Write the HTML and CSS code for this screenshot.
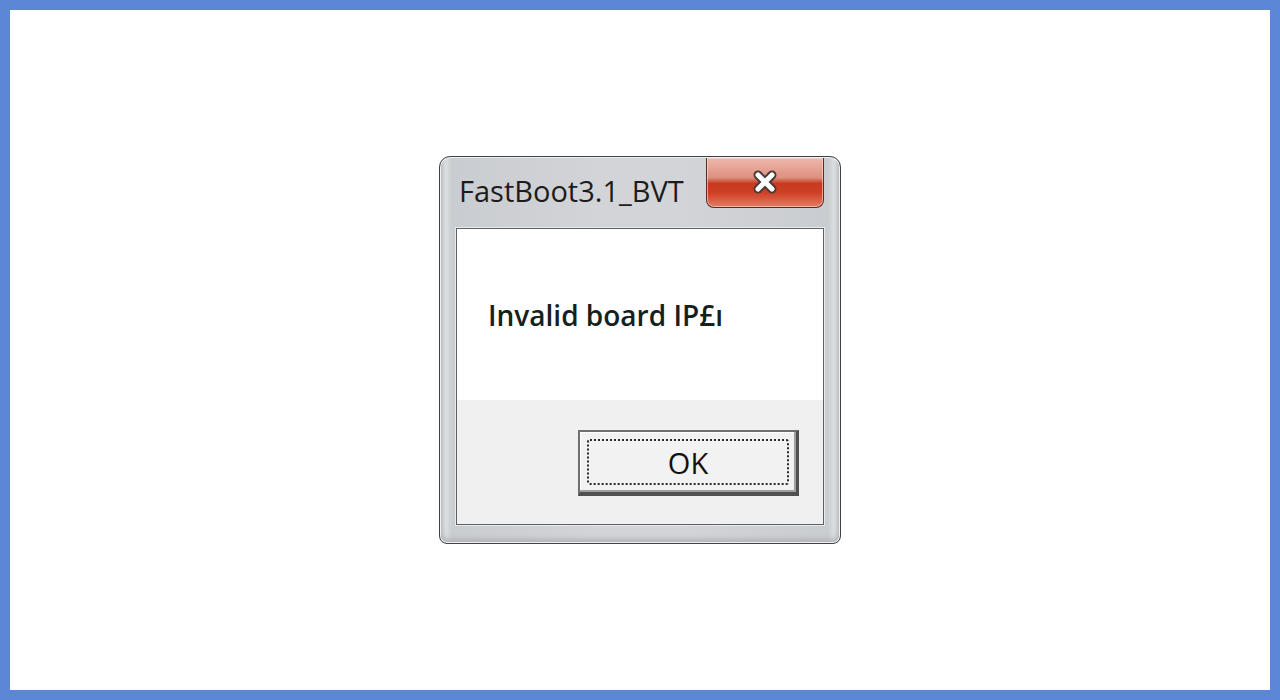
FILE: index.html
```html
<!DOCTYPE html>
<html lang="en">
<head>
    <meta charset="UTF-8">
    <meta name="viewport" content="width=device-width, initial-scale=1.0">
    <title>FastBoot3.1_BVT</title>
    <link rel="stylesheet" href="styles.css">
</head>
<body>
    <div class="page">
        <div class="dialog">
            <div class="titlebar">
                <span class="title">FastBoot3.1_BVT</span>
                <div class="close">
                    <svg width="30" height="26" viewBox="0 0 30 26">
                        <path d="M8 5 L22 19 M22 5 L8 19" stroke="#4a3a38" stroke-width="9" stroke-linecap="round"/>
                        <path d="M8 5 L22 19 M22 5 L8 19" stroke="#ffffff" stroke-width="5" stroke-linecap="round"/>
                    </svg>
                </div>
            </div>
            <div class="client">
                <div class="message">Invalid board IP£ı</div>
                <div class="footer">
                    <button type="button" class="ok"><span class="focus">OK</span></button>
                </div>
            </div>
        </div>
    </div>
</body>
</html>
```

FILE: styles.css
```css
body {
    margin: 0;
    background: #5b87d6;
    padding: 10px;
    height: 680px;
}
.page {
    background: #ffffff;
    height: 680px;
    display: flex;
    align-items: center;
    justify-content: center;
}
.dialog {
    width: 402px;
    height: 388px;
    box-sizing: border-box;
    border: 1px solid #3f4246;
    border-radius: 11px 11px 8px 8px;
    background: linear-gradient(to right, #b9bcc1 0, #dcdee1 6px, #c9ccd0 12px, #d2d4d8 40%, #d2d4d8 60%, #c9ccd0 calc(100% - 12px), #dcdee1 calc(100% - 6px), #b9bcc1 100%);
    box-shadow: inset 0 0 0 1px #eef0f2, inset 0 -6px 6px -3px #a9acb1;
    display: flex;
    flex-direction: column;
    padding: 0 16px 18px 16px;
}
.titlebar {
    height: 71px;
    display: flex;
    justify-content: space-between;
    align-items: flex-start;
}
.title {
    font-family: "Open Sans", sans-serif;
    font-size: 29px;
    color: #1c1c1c;
    margin-top: 14px;
    margin-left: 3px;
}
.close {
    width: 116px;
    height: 49px;
    margin-top: 1px;
    border: 1px solid #5b2b24;
    border-top: none;
    border-radius: 0 0 8px 8px;
    background: linear-gradient(to bottom, #eeb8ac 0, #de9080 40%, #c8391f 52%, #cd3f24 70%, #e27c63 100%);
    box-shadow: inset 0 0 0 1px rgba(255, 220, 210, 0.6);
    display: flex;
    align-items: center;
    justify-content: center;
}
.client {
    flex: 1;
    border: 1px solid #5e6064;
    box-shadow: 0 0 0 1px #e9eaec;
    background: #ffffff;
    display: flex;
    flex-direction: column;
}
.message {
    height: 171px;
    box-sizing: border-box;
    padding: 67px 0 0 31px;
    font-family: "Open Sans", sans-serif;
    font-weight: 600;
    font-size: 28px;
    color: #15221c;
}
.footer {
    flex: 1;
    background: #f0f0f0;
    display: flex;
    justify-content: flex-end;
    align-items: flex-start;
    padding: 30px 24px 0 0;
}
.ok {
    width: 221px;
    height: 66px;
    padding: 7px;
    background: #f2f2f2;
    border: 2px solid #6f6f6f;
    border-right: 3px solid #505050;
    border-bottom: 4px solid #505050;
    box-shadow: inset -2px -2px 0 #a0a0a0, inset 1px 1px 0 #ffffff;
    display: flex;
    margin: 0;
}
.focus {
    flex: 1;
    border: 2px dotted #2a2a2a;
    border-radius: 3px;
    display: flex;
    align-items: center;
    justify-content: center;
    font-family: "Open Sans", sans-serif;
    font-size: 29px;
    color: #111111;
}
```
